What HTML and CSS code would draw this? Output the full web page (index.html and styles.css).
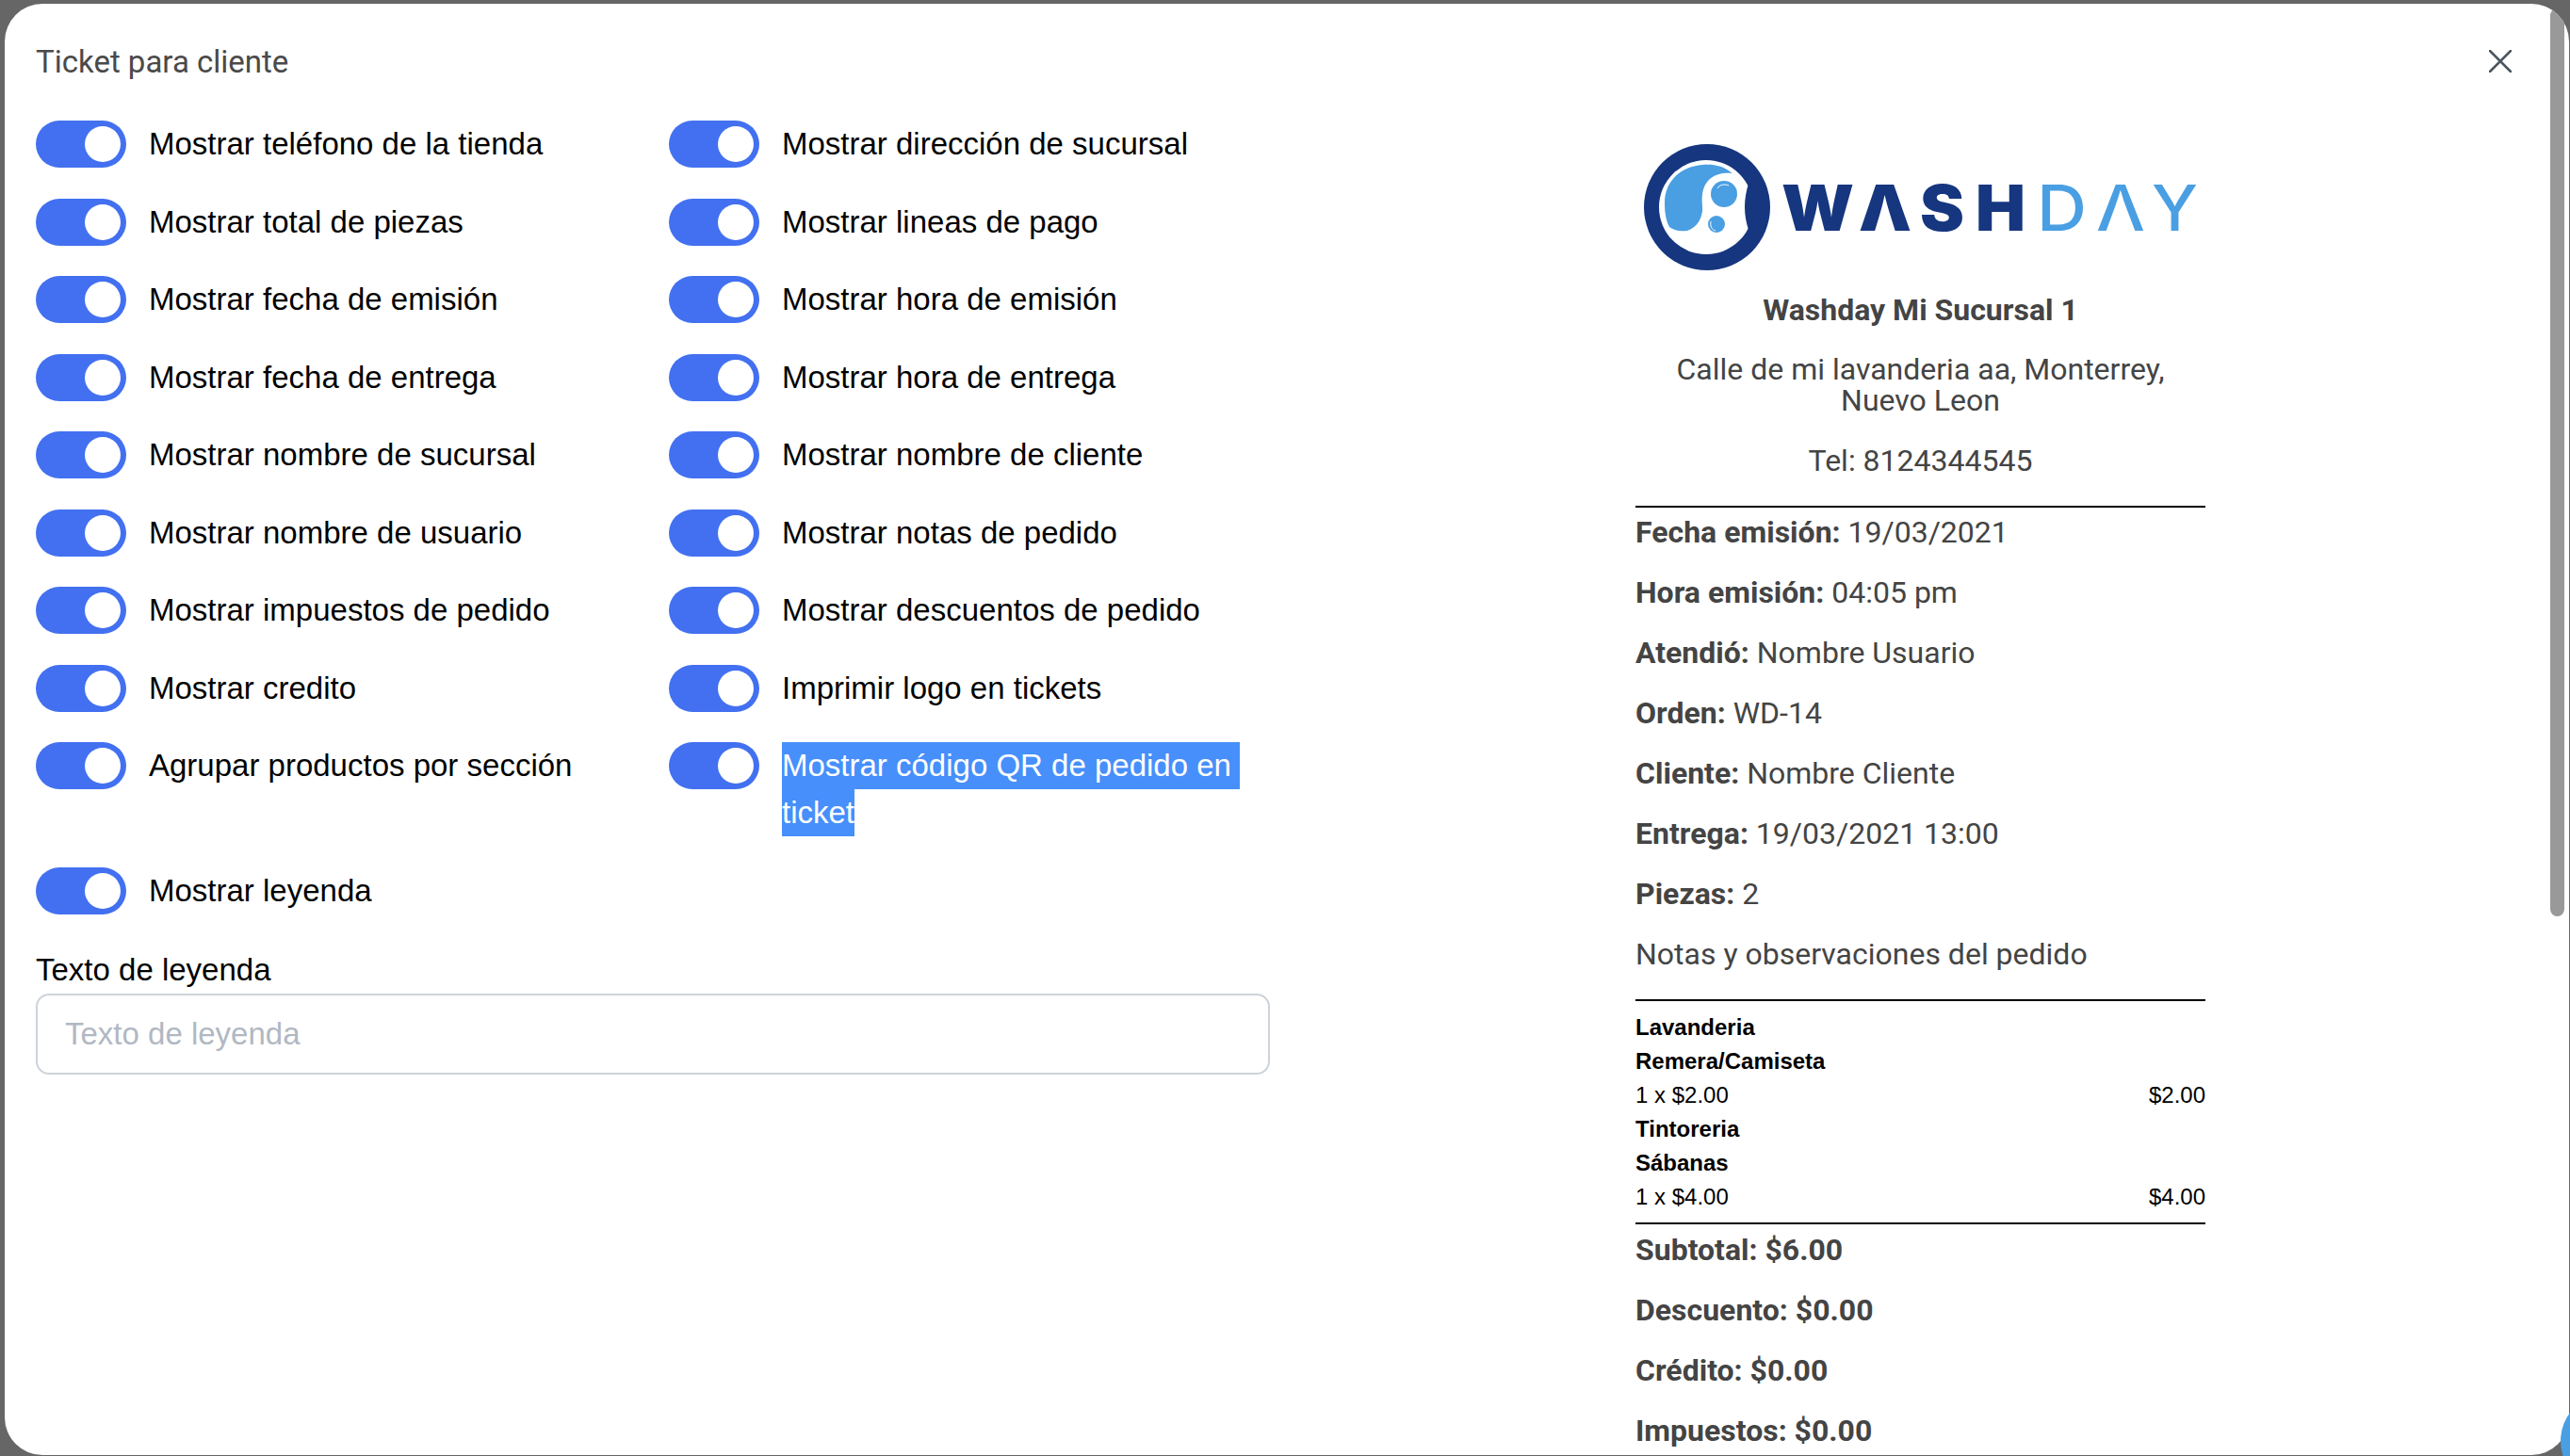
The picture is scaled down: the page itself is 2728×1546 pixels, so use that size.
FILE: index.html
```html
<!DOCTYPE html>
<html lang="es">
<head>
  <meta charset="UTF-8" />
  <title>Ticket para cliente</title>
  <link rel="stylesheet" href="styles.css">
</head>
<body>
  <div class="modal">
    <header class="modal-header">
      <h2 class="modal-title">Ticket para cliente</h2>
      <svg class="close-icon" viewBox="0 0 24 24"><path d="M1 1L23 23M23 1L1 23"/></svg>
    </header>
    <div class="modal-body">
      <section class="settings">
        <div class="switches">
          <div class="switch-row"><span class="switch"></span><span class="switch-label">Mostrar teléfono de la tienda</span></div>
          <div class="switch-row"><span class="switch"></span><span class="switch-label">Mostrar dirección de sucursal</span></div>
          <div class="switch-row"><span class="switch"></span><span class="switch-label">Mostrar total de piezas</span></div>
          <div class="switch-row"><span class="switch"></span><span class="switch-label">Mostrar lineas de pago</span></div>
          <div class="switch-row"><span class="switch"></span><span class="switch-label">Mostrar fecha de emisión</span></div>
          <div class="switch-row"><span class="switch"></span><span class="switch-label">Mostrar hora de emisión</span></div>
          <div class="switch-row"><span class="switch"></span><span class="switch-label">Mostrar fecha de entrega</span></div>
          <div class="switch-row"><span class="switch"></span><span class="switch-label">Mostrar hora de entrega</span></div>
          <div class="switch-row"><span class="switch"></span><span class="switch-label">Mostrar nombre de sucursal</span></div>
          <div class="switch-row"><span class="switch"></span><span class="switch-label">Mostrar nombre de cliente</span></div>
          <div class="switch-row"><span class="switch"></span><span class="switch-label">Mostrar nombre de usuario</span></div>
          <div class="switch-row"><span class="switch"></span><span class="switch-label">Mostrar notas de pedido</span></div>
          <div class="switch-row"><span class="switch"></span><span class="switch-label">Mostrar impuestos de pedido</span></div>
          <div class="switch-row"><span class="switch"></span><span class="switch-label">Mostrar descuentos de pedido</span></div>
          <div class="switch-row"><span class="switch"></span><span class="switch-label">Mostrar credito</span></div>
          <div class="switch-row"><span class="switch"></span><span class="switch-label">Imprimir logo en tickets</span></div>
          <div class="switch-row"><span class="switch"></span><span class="switch-label">Agrupar productos por sección</span></div>
          <div class="switch-row"><span class="switch"></span><span class="switch-label"><span class="selected selected-first">Mostrar código QR de pedido en</span><span class="selected">ticket</span></span></div>
          <div class="switch-row"><span class="switch"></span><span class="switch-label">Mostrar leyenda</span></div>
        </div>
        <label class="field-label">Texto de leyenda</label>
        <div class="field-input">Texto de leyenda</div>
      </section>

      <section class="ticket">
        <svg class="logo" viewBox="0 0 600 134">
          <circle cx="67" cy="67" r="67" fill="#16367f"/>
          <circle cx="66" cy="67" r="50" fill="#fff"/>
          <path d="M111 42Q103 67 111 91L126 67Z" fill="#16367f"/>
          <path d="M94 31C84 23 74 21 62 22C38 24 22 40 22 62C22 72 23 80 27 88C33 92 40 93 46 92C58 88 63 76 62 66C61 55 62 44 70 37C77 31 86 30 94 31Z" fill="#4a9fe3"/>
          <circle cx="85" cy="53" r="14" fill="#4a9fe3"/>
          <path d="M78 47C80 43 86 42 90 44" fill="none" stroke="#fff" stroke-width="1"/>
          <circle cx="77" cy="85" r="9" fill="#4a9fe3"/>
          <path d="M71 82C70 87 72 91 76 92" fill="none" stroke="#fff" stroke-width="1"/>
          <g class="logo-dark">
            <text x="146" y="92" textLength="77" lengthAdjust="spacingAndGlyphs">W</text>
            <text x="228" y="92" textLength="56" lengthAdjust="spacingAndGlyphs">Λ</text>
            <text x="293" y="92" textLength="47" lengthAdjust="spacingAndGlyphs">S</text>
            <text x="352" y="92" textLength="53" lengthAdjust="spacingAndGlyphs">H</text>
          </g>
          <g class="logo-light">
            <text x="417" y="92" textLength="53" lengthAdjust="spacingAndGlyphs">D</text>
            <text x="480" y="92" textLength="52" lengthAdjust="spacingAndGlyphs">Λ</text>
            <text x="539" y="92" textLength="49" lengthAdjust="spacingAndGlyphs">Y</text>
          </g>
        </svg>
        <p class="ticket-center ticket-name"><b>Washday Mi Sucursal 1</b></p>
        <p class="ticket-center">Calle de mi lavanderia aa, Monterrey,<br>Nuevo Leon</p>
        <p class="ticket-center">Tel: 8124344545</p>
        <hr class="ticket-rule">
        <div class="ticket-info">
          <p><b>Fecha emisión:</b> 19/03/2021</p>
          <p><b>Hora emisión:</b> 04:05 pm</p>
          <p><b>Atendió:</b> Nombre Usuario</p>
          <p><b>Orden:</b> WD-14</p>
          <p><b>Cliente:</b> Nombre Cliente</p>
          <p><b>Entrega:</b> 19/03/2021 13:00</p>
          <p><b>Piezas:</b> 2</p>
          <p>Notas y observaciones del pedido</p>
        </div>
        <hr class="ticket-rule">
        <div class="ticket-items">
          <div class="item-name">Lavanderia</div>
          <div class="item-name">Remera/Camiseta</div>
          <div class="item-line"><span>1 x $2.00</span><span>$2.00</span></div>
          <div class="item-name">Tintoreria</div>
          <div class="item-name">Sábanas</div>
          <div class="item-line"><span>1 x $4.00</span><span>$4.00</span></div>
        </div>
        <hr class="ticket-rule">
        <div class="ticket-totals">
          <p>Subtotal: $6.00</p>
          <p>Descuento: $0.00</p>
          <p>Crédito: $0.00</p>
          <p>Impuestos: $0.00</p>
        </div>
      </section>
    </div>
    <div class="scrollbar"></div>
  </div>
  <div class="fab"></div>
</body>
</html>
```

FILE: styles.css
```css
html, body {
  height: 100%;
}
body {
  margin: 0;
  box-sizing: border-box;
  padding: 4px 1px 1px 5px;
  background-color: #666;
  font-family: "Liberation Sans", Arial, sans-serif;
  overflow: hidden;
  position: relative;
}
.modal {
  height: 100%;
  background-color: #fff;
  border-radius: 40px;
  overflow: hidden;
  position: relative;
}
.modal-header {
  height: 122px;
  padding: 0 61px 0 33px;
  display: flex;
  align-items: center;
  justify-content: space-between;
}
.modal-title {
  margin: 0;
  font-family: Roboto, sans-serif;
  font-size: 33px;
  font-weight: 400;
  color: #4a4a4a;
}
.close-icon {
  width: 24px;
  height: 24px;
  fill: none;
  stroke: #4a5560;
  stroke-width: 2.5;
  stroke-linecap: round;
}
.modal-body {
  display: flex;
  gap: 388px;
  padding: 2px 0 0 33px;
}
.settings {
  width: 1310px;
  flex-shrink: 0;
}
.switches {
  display: grid;
  grid-template-columns: 672px 638px;
  row-gap: 32.5px;
}
.switch-row {
  display: flex;
  gap: 24px;
  font-size: 33px;
  line-height: 50px;
  color: #000;
}
.switch {
  width: 96px;
  height: 50px;
  flex-shrink: 0;
  background-color: #4270f0;
  border-radius: 25px;
  position: relative;
}
.switch::after {
  content: "";
  position: absolute;
  top: 6px;
  right: 6px;
  width: 38px;
  height: 38px;
  background-color: #fff;
  border-radius: 50%;
}
.selected {
  display: block;
  width: fit-content;
  background-color: #478ffb;
  color: #fff;
}
.selected-first {
  padding-right: 9px;
}
.field-label {
  display: block;
  margin-top: 34px;
  font-size: 33px;
  line-height: 50px;
  color: #000;
}
.field-input {
  box-sizing: border-box;
  height: 86px;
  padding: 0 29px;
  border: 2px solid #cdd3da;
  border-radius: 14px;
  font-size: 33px;
  line-height: 82px;
  color: #b1b8c3;
}

.ticket {
  width: 605px;
  flex-shrink: 0;
  padding-top: 25px;
  font-family: Roboto, sans-serif;
  font-size: 32px;
  line-height: 33px;
  color: #444;
}
.ticket p {
  margin: 0 0 31px;
}
.logo {
  display: block;
  width: 600px;
  height: 134px;
  margin: 0 0 26px 9px;
}
.logo text {
  font-family: Inter, sans-serif;
  font-size: 67px;
}
.logo-dark {
  fill: #16367f;
  font-weight: 900;
}
.logo-light {
  fill: #4a9fe3;
  font-weight: 500;
}
.ticket-center {
  text-align: center;
}
.ticket .ticket-name {
  margin-bottom: 30px;
}
.ticket-rule {
  margin: 0;
  height: 2px;
  border: 0;
  background-color: #000;
}
.ticket-info {
  padding-top: 10px;
}
.ticket-items {
  padding: 10px 0 9px;
  font-family: "Liberation Sans", Arial, sans-serif;
  font-size: 24px;
  line-height: 36px;
  color: #000;
}
.item-name {
  font-weight: bold;
}
.item-line {
  display: flex;
  justify-content: space-between;
}
.ticket-totals {
  padding-top: 11px;
  font-weight: bold;
}
.scrollbar {
  position: absolute;
  top: 5px;
  right: 5px;
  width: 15px;
  height: 964px;
  background-color: #999;
  border-radius: 8px;
}
.fab {
  position: absolute;
  left: 2718px;
  top: 1480px;
  width: 100px;
  height: 100px;
  background-color: #4a9fe3;
  border-radius: 50%;
}
```
